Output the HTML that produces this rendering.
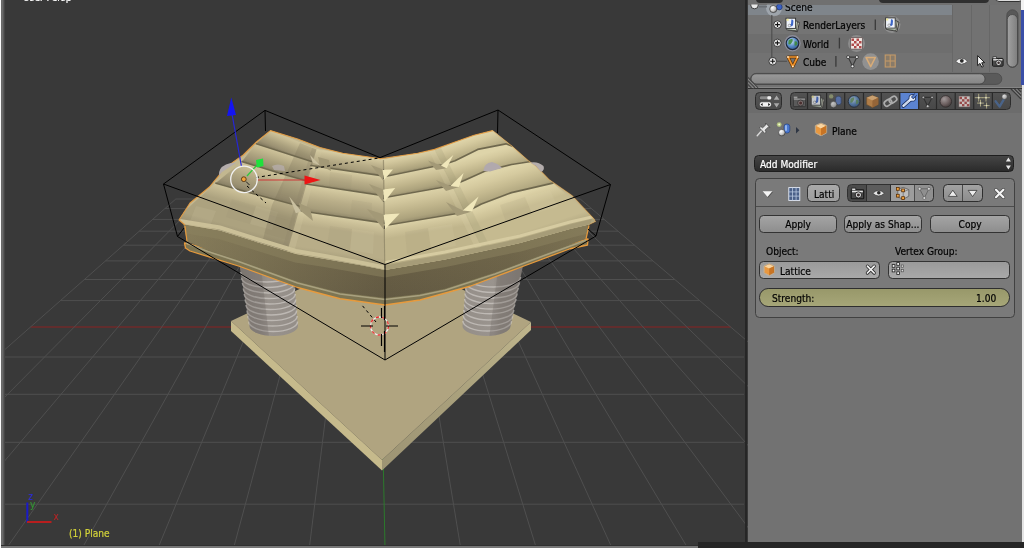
<!DOCTYPE html>
<html lang="en">
<head>
<meta charset="utf-8">
<title>Blender - Lattice Modifier</title>
<style>
html,body{margin:0;padding:0;}
body{width:1024px;height:548px;overflow:hidden;background:#727272;position:relative;font-family:"DejaVu Sans","Liberation Sans",sans-serif;font-stretch:condensed;font-size:10.1px;color:#000;}
.abs{position:absolute;}
#vp{position:absolute;left:0;top:0;width:748px;height:548px;display:block;}
#ico{position:absolute;left:0;top:0;width:1024px;height:548px;display:block;pointer-events:none;}
.t,.btn{will-change:transform;-webkit-text-stroke:0.2px currentColor;}
.t{position:absolute;white-space:nowrap;line-height:13px;height:13px;margin-top:1.2px;}
.btn{position:absolute;box-sizing:border-box;border:1px solid #333;border-radius:4.5px;background:linear-gradient(#a4a4a4,#8e8e8e);text-align:center;line-height:18.4px;white-space:nowrap;overflow:hidden;}
.fld{position:absolute;box-sizing:border-box;border:1px solid #333;border-radius:4.5px;background:linear-gradient(#9a9a9a,#a9a9a9);line-height:16px;white-space:nowrap;overflow:hidden;}
</style>
</head>
<body>
<svg id="vp" width="748" height="548" viewBox="0 0 748 548">
<defs>
<linearGradient id="colL" x1="0" y1="0" x2="1" y2="0">
<stop offset="0" stop-color="#7c7672"/><stop offset="0.36" stop-color="#88827d"/><stop offset="0.42" stop-color="#a49d98"/><stop offset="0.9" stop-color="#aaa39e"/><stop offset="1" stop-color="#9a938e"/>
</linearGradient>
<linearGradient id="colR" x1="0" y1="0" x2="1" y2="0">
<stop offset="0" stop-color="#9a938e"/><stop offset="0.1" stop-color="#a8a19c"/><stop offset="0.52" stop-color="#a39c97"/><stop offset="0.58" stop-color="#8a847f"/><stop offset="1" stop-color="#807a76"/>
</linearGradient>
<clipPath id="clipColL"><path d="M240,255 L249.5,328 Q251,334 262,335.5 Q274,337 287,334.5 Q297,331 298,323 L294,262 Z"/></clipPath>
<clipPath id="clipColR"><path d="M467,262 L462.5,322.5 Q463,331 474,334.5 Q487,337.5 500,335 Q509,333 510,328 L521.5,262 Z"/></clipPath>
<linearGradient id="band" x1="0" y1="0" x2="0" y2="1"><stop offset="0" stop-color="#6f6549"/><stop offset="1" stop-color="#625942"/></linearGradient>
<clipPath id="clipTop"><path d="M179,220 L190,203 L209.4,187 L218.8,175.7 L222,170 L233.8,161.6 L243.2,155 L256.4,142 L270.4,130.6 L297.7,139 L320,147.5 L342.8,153.2 L369,157 L380.3,158.8 L417.6,153.2 L434.5,149.4 L455,142 L474,135.3 L492.7,130.6 L511.5,145.7 L528.4,160.7 L536,166 L549,179.5 L572,195.4 L594,219 L595.5,221.5 L589,224.5 L570,229 L520,243 L445,259.5 L385,270 L362.5,265.5 L325,259 L296,254 L258,242.5 L220,230.5 L185,224.5 Z"/></clipPath>
<linearGradient id="colL2" x1="0" y1="0" x2="1" y2="0"><stop offset="0" stop-color="#817b75"/><stop offset="0.4" stop-color="#8d8781"/><stop offset="0.5" stop-color="#98928c"/><stop offset="1" stop-color="#948e88"/></linearGradient>
<linearGradient id="colR2" x1="0" y1="0" x2="1" y2="0"><stop offset="0" stop-color="#948e88"/><stop offset="0.5" stop-color="#9a948e"/><stop offset="0.62" stop-color="#8c867f"/><stop offset="1" stop-color="#827c76"/></linearGradient>
<linearGradient id="gA0" gradientUnits="userSpaceOnUse" x1="293.4" y1="140.0" x2="287.7" y2="154.2"><stop offset="0" stop-color="#cfc49c"/><stop offset="0.22" stop-color="#c2b790"/><stop offset="0.55" stop-color="#aca27f"/><stop offset="0.85" stop-color="#9b9173"/><stop offset="1" stop-color="#8a8166"/></linearGradient>
<linearGradient id="gA1" gradientUnits="userSpaceOnUse" x1="283.9" y1="152.7" x2="277.6" y2="172.3"><stop offset="0" stop-color="#cfc49c"/><stop offset="0.22" stop-color="#c2b790"/><stop offset="0.55" stop-color="#aca27f"/><stop offset="0.85" stop-color="#9b9173"/><stop offset="1" stop-color="#8a8166"/></linearGradient>
<linearGradient id="gA2" gradientUnits="userSpaceOnUse" x1="274.6" y1="171.3" x2="266.8" y2="197.4"><stop offset="0" stop-color="#cfc49c"/><stop offset="0.22" stop-color="#c2b790"/><stop offset="0.55" stop-color="#aca27f"/><stop offset="0.85" stop-color="#9b9173"/><stop offset="1" stop-color="#8a8166"/></linearGradient>
<linearGradient id="gA3" gradientUnits="userSpaceOnUse" x1="257.5" y1="194.6" x2="245.4" y2="238.7"><stop offset="0" stop-color="#cfc49c"/><stop offset="0.12" stop-color="#c2b790"/><stop offset="0.32" stop-color="#aca27f"/><stop offset="0.8" stop-color="#aca27f"/><stop offset="1" stop-color="#9b9173"/></linearGradient>
<linearGradient id="gB0" gradientUnits="userSpaceOnUse" x1="350.8" y1="154.4" x2="348.3" y2="170.9"><stop offset="0" stop-color="#d8cea5"/><stop offset="0.2" stop-color="#cbc098"/><stop offset="0.5" stop-color="#b8ad88"/><stop offset="0.85" stop-color="#a69c7a"/><stop offset="1" stop-color="#90876a"/></linearGradient>
<linearGradient id="gB1" gradientUnits="userSpaceOnUse" x1="348.0" y1="170.8" x2="345.3" y2="189.9"><stop offset="0" stop-color="#d8cea5"/><stop offset="0.2" stop-color="#cbc098"/><stop offset="0.5" stop-color="#b8ad88"/><stop offset="0.85" stop-color="#a69c7a"/><stop offset="1" stop-color="#90876a"/></linearGradient>
<linearGradient id="gB2" gradientUnits="userSpaceOnUse" x1="345.5" y1="189.9" x2="341.5" y2="216.8"><stop offset="0" stop-color="#d8cea5"/><stop offset="0.2" stop-color="#cbc098"/><stop offset="0.5" stop-color="#b8ad88"/><stop offset="0.85" stop-color="#a69c7a"/><stop offset="1" stop-color="#90876a"/></linearGradient>
<linearGradient id="gB3" gradientUnits="userSpaceOnUse" x1="341.5" y1="216.8" x2="335.2" y2="260.3"><stop offset="0" stop-color="#d8cea5"/><stop offset="0.12" stop-color="#cbc098"/><stop offset="0.32" stop-color="#b8ad88"/><stop offset="0.8" stop-color="#b8ad88"/><stop offset="1" stop-color="#a69c7a"/></linearGradient>
<linearGradient id="gC0" gradientUnits="userSpaceOnUse" x1="409.8" y1="154.4" x2="413.1" y2="170.7"><stop offset="0" stop-color="#dcd2a8"/><stop offset="0.25" stop-color="#d1c69c"/><stop offset="0.55" stop-color="#c0b58c"/><stop offset="0.85" stop-color="#ada37d"/><stop offset="1" stop-color="#978e6e"/></linearGradient>
<linearGradient id="gC1" gradientUnits="userSpaceOnUse" x1="413.0" y1="170.8" x2="417.3" y2="191.8"><stop offset="0" stop-color="#dcd2a8"/><stop offset="0.25" stop-color="#d1c69c"/><stop offset="0.55" stop-color="#c0b58c"/><stop offset="0.85" stop-color="#ada37d"/><stop offset="1" stop-color="#978e6e"/></linearGradient>
<linearGradient id="gC2" gradientUnits="userSpaceOnUse" x1="418.8" y1="191.5" x2="423.7" y2="219.1"><stop offset="0" stop-color="#dcd2a8"/><stop offset="0.25" stop-color="#d1c69c"/><stop offset="0.55" stop-color="#c0b58c"/><stop offset="0.85" stop-color="#ada37d"/><stop offset="1" stop-color="#978e6e"/></linearGradient>
<linearGradient id="gC3" gradientUnits="userSpaceOnUse" x1="425.5" y1="218.8" x2="432.5" y2="260.5"><stop offset="0" stop-color="#dcd2a8"/><stop offset="0.12" stop-color="#d1c69c"/><stop offset="0.32" stop-color="#c0b58c"/><stop offset="0.8" stop-color="#c0b58c"/><stop offset="1" stop-color="#ada37d"/></linearGradient>
<linearGradient id="gD0" gradientUnits="userSpaceOnUse" x1="463.6" y1="140.0" x2="469.4" y2="158.0"><stop offset="0" stop-color="#ded4a9"/><stop offset="0.25" stop-color="#d5ca9f"/><stop offset="0.55" stop-color="#c5ba90"/><stop offset="0.85" stop-color="#b2a881"/><stop offset="1" stop-color="#9a9070"/></linearGradient>
<linearGradient id="gD1" gradientUnits="userSpaceOnUse" x1="477.2" y1="155.5" x2="482.8" y2="175.9"><stop offset="0" stop-color="#ded4a9"/><stop offset="0.25" stop-color="#d5ca9f"/><stop offset="0.55" stop-color="#c5ba90"/><stop offset="0.85" stop-color="#b2a881"/><stop offset="1" stop-color="#9a9070"/></linearGradient>
<linearGradient id="gD2" gradientUnits="userSpaceOnUse" x1="491.8" y1="173.5" x2="500.1" y2="200.5"><stop offset="0" stop-color="#ded4a9"/><stop offset="0.25" stop-color="#d5ca9f"/><stop offset="0.55" stop-color="#c5ba90"/><stop offset="0.85" stop-color="#b2a881"/><stop offset="1" stop-color="#9a9070"/></linearGradient>
<linearGradient id="gD3" gradientUnits="userSpaceOnUse" x1="509.4" y1="197.6" x2="523.8" y2="241.1"><stop offset="0" stop-color="#ded4a9"/><stop offset="0.12" stop-color="#d5ca9f"/><stop offset="0.32" stop-color="#c5ba90"/><stop offset="0.8" stop-color="#c5ba90"/><stop offset="1" stop-color="#b2a881"/></linearGradient>
<linearGradient id="baseR" gradientUnits="userSpaceOnUse" x1="382" y1="465" x2="531" y2="326"><stop offset="0" stop-color="#9d9474"/><stop offset="0.5" stop-color="#a9a07c"/><stop offset="1" stop-color="#bfb58c"/></linearGradient>
<clipPath id="clipBand"><path d="M183,222 L220,229.6 L258,241.5 L296,253 L325,257.5 L362.5,264 L385,268 L445,257.5 L520,242 L570,228.5 L590,222 L586,238.75 L545,253.75 L495,272.5 L445,288.75 L420,294 L385,298 L340,292.5 L297.5,281.5 L240,260.5 L207.8,250 L187,241.5 Z"/></clipPath>
<linearGradient id="bandH" gradientUnits="userSpaceOnUse" x1="183" y1="0" x2="590" y2="0"><stop offset="0" stop-color="#a89e74" stop-opacity="0.42"/><stop offset="0.35" stop-color="#a89e74" stop-opacity="0.12"/><stop offset="0.5" stop-color="#a89e74" stop-opacity="0"/><stop offset="0.8" stop-color="#a89e74" stop-opacity="0.08"/><stop offset="1" stop-color="#a89e74" stop-opacity="0.25"/></linearGradient>
</defs>
<rect x="0" y="0" width="748" height="548" fill="#393939"/>
<!-- grid floor -->
<g id="grid" stroke="#4f4f4f" stroke-width="1" fill="none">
<line x1="175.8" y1="199" x2="580.2" y2="199"/>
<line x1="164.9" y1="208.6" x2="591.5" y2="208.6"/>
<line x1="152.7" y1="219.4" x2="604.2" y2="219.4"/>
<line x1="139.3" y1="231.2" x2="618.0" y2="231.2"/>
<line x1="123.4" y1="245.2" x2="634.5" y2="245.2"/>
<line x1="105.5" y1="260.9" x2="652.9" y2="260.9"/>
<line x1="84.4" y1="279.5" x2="674.8" y2="279.5"/>
<line x1="60.5" y1="300.6" x2="699.6" y2="300.6"/>
<line x1="30.5" y1="327" x2="730.6" y2="327" stroke="#8a2222"/>
<line x1="0.0" y1="357" x2="744.0" y2="357"/>
<line x1="0.0" y1="394.3" x2="744.0" y2="394.3"/>
<line x1="0.0" y1="442.3" x2="744.0" y2="442.3"/>
<line x1="0.0" y1="504.2" x2="744.0" y2="504.2"/>
<line x1="175.8" y1="199" x2="-220.4" y2="548"/>
<line x1="201.1" y1="199" x2="-144.7" y2="548"/>
<line x1="226.4" y1="199" x2="-69.1" y2="548"/>
<line x1="251.6" y1="199" x2="6.6" y2="548"/>
<line x1="276.9" y1="199" x2="82.3" y2="548"/>
<line x1="302.2" y1="199" x2="158.0" y2="548"/>
<line x1="327.5" y1="199" x2="233.6" y2="548"/>
<line x1="352.7" y1="199" x2="309.3" y2="548"/>
<line x1="378.0" y1="199" x2="385.0" y2="548" stroke="#2c7a2c"/>
<line x1="403.3" y1="199" x2="460.7" y2="548"/>
<line x1="428.5" y1="199" x2="536.3" y2="548"/>
<line x1="453.8" y1="199" x2="612.0" y2="548"/>
<line x1="479.1" y1="199" x2="687.7" y2="548"/>
<line x1="504.4" y1="199" x2="763.3" y2="548"/>
<line x1="529.6" y1="199" x2="839.0" y2="548"/>
<line x1="554.9" y1="199" x2="914.7" y2="548"/>
<line x1="580.2" y1="199" x2="990.4" y2="548"/>

</g>
<!-- base plate -->
<g id="base">
<polygon points="231,321 381,251 531,322 382,460" fill="#b0a480"/>
<polygon points="231,321 382,460 382,470.5 231,331" fill="#c6ba8c"/>
<polygon points="382,460 531,322 531,330 382,470.5" fill="url(#baseR)"/>
</g>
<!-- columns -->
<g id="colLeft">
<path d="M238.0,256 L249.5,326 A24.2,10 0 0 0 298.0,326 L292.1,256 Z" fill="url(#colL2)"/>
<g fill="none" stroke="#e4e0db" stroke-width="1.5" stroke-opacity="0.5">
<path d="M240.6,272.0 A26.4,10 0 0 0 293.4,272.0"/>
<path d="M241.5,277.5 A26.2,10 0 0 0 293.9,277.5"/>
<path d="M242.4,283.0 A26.0,10 0 0 0 294.4,283.0"/>
<path d="M243.3,288.5 A25.7,10 0 0 0 294.8,288.5"/>
<path d="M244.2,294.0 A25.5,10 0 0 0 295.3,294.0"/>
<path d="M245.1,299.5 A25.3,10 0 0 0 295.8,299.5"/>
<path d="M246.0,305.0 A25.1,10 0 0 0 296.2,305.0"/>
<path d="M246.9,310.5 A24.9,10 0 0 0 296.7,310.5"/>
<path d="M247.9,316.0 A24.6,10 0 0 0 297.2,316.0"/>
<path d="M248.8,321.5 A24.4,10 0 0 0 297.6,321.5"/>
</g>
<clipPath id="clip_colLeft"><path d="M238.0,256 L249.5,326 A24.2,10 0 0 0 298.0,326 L292.1,256 Z"/></clipPath>
<path d="M259.6,256 L268.9,336 L248.5,336 L237.0,256 Z" fill="#6e6864" fill-opacity="0.3" clip-path="url(#clip_colLeft)"/>
</g>
<g id="colRight">
<path d="M467.5,262 L462.5,326 A24.0,10 0 0 0 510.5,326 L523.7,262 Z" fill="url(#colR2)"/>
<g fill="none" stroke="#e4e0db" stroke-width="1.5" stroke-opacity="0.5">
<path d="M466.3,277.0 A27.1,10 0 0 0 520.6,277.0"/>
<path d="M465.9,282.5 A26.8,10 0 0 0 519.5,282.5"/>
<path d="M465.5,288.0 A26.4,10 0 0 0 518.3,288.0"/>
<path d="M465.0,293.5 A26.1,10 0 0 0 517.2,293.5"/>
<path d="M464.6,299.0 A25.7,10 0 0 0 516.1,299.0"/>
<path d="M464.2,304.5 A25.4,10 0 0 0 514.9,304.5"/>
<path d="M463.8,310.0 A25.0,10 0 0 0 513.8,310.0"/>
<path d="M463.3,315.5 A24.7,10 0 0 0 512.7,315.5"/>
<path d="M462.9,321.0 A24.3,10 0 0 0 511.5,321.0"/>
</g>
<clipPath id="clip_colRight"><path d="M467.5,262 L462.5,326 A24.0,10 0 0 0 510.5,326 L523.7,262 Z"/></clipPath>
<path d="M499.0,262 L489.4,336 L511.5,336 L524.7,262 Z" fill="#6e6864" fill-opacity="0.3" clip-path="url(#clip_colRight)"/>
</g>
<!-- roof -->
<g id="roof">
<!-- lower lip -->
<path d="M184.5,243 L185.5,248 L190,251 L240,266.5 L297.5,287.5 L340,298.75 L385,305 L420,300 L470,286.25 L520,267.5 L570,248.75 L587.5,245 L588,239 L385,290 Z" fill="#7d7553" stroke="#e79a3c" stroke-width="1.3" stroke-linejoin="round"/>
<path d="M186,243 L207.8,251.5 L240,262 L297.5,283 L340,294 L385,299.5 L420,295.5 L445,290.25 L495,274 L545,255.25 L586,240.25" fill="none" stroke="#a9a17f" stroke-width="1.6"/>
<!-- dark band -->
<path d="M183,222 L220,229.6 L258,241.5 L296,253 L325,257.5 L362.5,264 L385,268 L445,257.5 L520,242 L570,228.5 L590,222 L586,238.75 L545,253.75 L495,272.5 L445,288.75 L420,294 L385,298 L340,292.5 L297.5,281.5 L240,260.5 L207.8,250 L187,241.5 Z" fill="url(#band)"/>
<path d="M183,222 L220,229.6 L258,241.5 L296,253 L325,257.5 L362.5,264 L385,268 L445,257.5 L520,242 L570,228.5 L590,222 L586,238.75 L545,253.75 L495,272.5 L445,288.75 L420,294 L385,298 L340,292.5 L297.5,281.5 L240,260.5 L207.8,250 L187,241.5 Z" fill="url(#bandH)"/>
<path d="M186,229 L220,234.6 L258,246.5 L296,258 L325,262.5 L362.5,269 L385,273 L445,262.5 L520,247 L570,233.5 L588,229" fill="none" stroke="#8a825e" stroke-opacity="0.55" stroke-width="9" clip-path="url(#clipBand)"/>
<!-- top surface -->
<path id="rooftop" d="M179,220 L190,203 L209.4,187 L218.8,175.7 L222,170 L233.8,161.6 L243.2,155 L256.4,142 L270.4,130.6 L297.7,139 L320,147.5 L342.8,153.2 L369,157 L380.3,158.8 L417.6,153.2 L434.5,149.4 L455,142 L474,135.3 L492.7,130.6 L511.5,145.7 L528.4,160.7 L536,166 L549,179.5 L572,195.4 L594,219 L595.5,221.5 L589,224.5 L570,229 L520,243 L445,259.5 L385,270 L362.5,265.5 L325,259 L296,254 L258,242.5 L220,230.5 L185,224.5 Z" fill="#c4b992"/>
<g clip-path="url(#clipTop)">
<rect x="170" y="120" width="440" height="160" fill="#c2b790"/>
<polygon points="270.4,130.6 316.5,149.4 311.5,161.5 256.4,143.8" fill="url(#gA0)" stroke="url(#gA0)" stroke-width="0.6"/>
<polygon points="256.4,143.8 311.5,161.5 307.0,181.0 279.0,173.0 242.3,161.6" fill="url(#gA1)" stroke="url(#gA1)" stroke-width="0.6"/>
<polygon points="242.3,161.6 279.0,173.0 307.0,181.0 299.0,206.0 256.4,194.5 216.0,183.2" fill="url(#gA2)" stroke="url(#gA2)" stroke-width="0.6"/>
<polygon points="216.0,183.2 256.4,194.5 299.0,206.0 287.5,251.0 258.0,242.0 220.0,230.0 176.0,219.0" fill="url(#gA3)" stroke="url(#gA3)" stroke-width="0.6"/>
<polygon points="316.5,149.4 354.0,155.0 385.0,159.5 385.0,176.2 311.0,165.5" fill="url(#gB0)" stroke="url(#gB0)" stroke-width="0.6"/>
<polygon points="311.0,165.5 385.0,176.2 385.0,195.8 306.0,184.0" fill="url(#gB1)" stroke="url(#gB1)" stroke-width="0.6"/>
<polygon points="306.0,184.0 385.0,195.8 385.0,223.2 298.0,210.5" fill="url(#gB2)" stroke="url(#gB2)" stroke-width="0.6"/>
<polygon points="298.0,210.5 385.0,223.2 385.0,270.0 325.0,258.5 287.5,251.0" fill="url(#gB3)" stroke="url(#gB3)" stroke-width="0.6"/>
<polygon points="385.0,159.5 434.5,149.4 441.0,165.0 385.0,176.5" fill="url(#gC0)" stroke="url(#gC0)" stroke-width="0.6"/>
<polygon points="385.0,176.5 441.0,165.0 452.5,185.5 385.0,197.5" fill="url(#gC1)" stroke="url(#gC1)" stroke-width="0.6"/>
<polygon points="385.0,197.5 452.5,185.5 466.0,212.0 385.0,225.5" fill="url(#gC2)" stroke="url(#gC2)" stroke-width="0.6"/>
<polygon points="385.0,225.5 466.0,212.0 483.0,250.5 445.0,259.0 385.0,270.0" fill="url(#gC3)" stroke="url(#gC3)" stroke-width="0.6"/>
<polygon points="434.5,149.4 455.0,142.0 474.0,135.3 492.7,130.6 512.0,146.0 505.9,143.8 477.7,149.4 455.0,160.7 442.5,165.0" fill="url(#gD0)" stroke="url(#gD0)" stroke-width="0.6"/>
<polygon points="442.5,165.0 455.0,160.7 477.7,149.4 505.9,143.8 512.0,146.0 531.0,161.5 511.5,164.5 485.2,171.0 466.4,179.5 452.6,185.5" fill="url(#gD1)" stroke="url(#gD1)" stroke-width="0.6"/>
<polygon points="452.6,185.5 466.4,179.5 485.2,171.0 511.5,164.5 531.0,161.5 552.8,183.2 511.5,192.6 481.4,204.0 466.0,212.0" fill="url(#gD2)" stroke="url(#gD2)" stroke-width="0.6"/>
<polygon points="466.0,212.0 481.4,204.0 511.5,192.6 552.8,183.2 597.0,221.0 570.0,229.0 520.0,243.0 483.0,250.5" fill="url(#gD3)" stroke="url(#gD3)" stroke-width="0.6"/>
<g fill="#8f866a" fill-opacity="0.11"><polygon points="232,199 256,206 250,224 226,217"/><polygon points="262,176 284,183 278,201 256,194"/><polygon points="270,215 292,221 288,240 264,233"/><polygon points="330,226 352,229 350,250 327,246"/><polygon points="352,200 372,203 371,221 350,218"/><polygon points="330,172 352,175 351,190 329,187"/><polygon points="405,232 428,228 431,250 407,254"/><polygon points="500,205 525,197 532,214 506,222"/></g>
<g fill="#e6dcb2" fill-opacity="0.11"><polygon points="256,206 278,212 272,230 250,224"/><polygon points="196,206 216,211 210,226 190,221"/><polygon points="352,229 374,232 373,254 350,250"/><polygon points="428,228 452,224 456,246 431,250"/><polygon points="525,197 550,190 558,207 532,214"/></g>
<polygon points="300,143 316.5,149.4 287.5,251 262,243 272,205 288,170" fill="#6e664e" fill-opacity="0.22"/>
<polygon points="312,148 316.5,149.4 287.5,251 282,249.5" fill="#8f866a" fill-opacity="0.3"/>
<polygon points="316.5,149.4 322,150.2 294,252.5 287.5,251" fill="#d2c89f" fill-opacity="0.3"/>
<polygon points="429,150.5 434.5,149.4 483,250.5 477,251.8" fill="#d8cea4" fill-opacity="0.3"/>
<polygon points="434.5,149.4 441,148 491,249 483,250.5" fill="#9d9474" fill-opacity="0.22"/>
<path d="M385,265.5 L445,254.5 L520,238.5 L570,224.5 L592,219 L590,225 L570,229.5 L520,243.5 L445,260 L385,270.5 Z" fill="#a69c78"/>
<path d="M180,221 L220,227.5 L258,239.5 L296,251 L325,256 L362.5,263 L385,267.5" fill="none" stroke="#cbc098" stroke-width="4"/><path d="M385,262.5 L445,252 L520,236 L570,222 L594,216.5" fill="none" stroke="#d6cba1" stroke-width="3"/>
<g fill="none" stroke="#6f684e" stroke-width="1.7" stroke-linecap="round" stroke-linejoin="round"><path d="M256.4,143.8 L311.5,161.5"/><path d="M242.3,161.6 L279.0,173.0 L307.0,181.0"/><path d="M216.0,183.2 L256.4,194.5 L299.0,206.0"/><path d="M311.0,165.5 L385.0,176.2"/><path d="M306.0,184.0 L385.0,195.8"/><path d="M298.0,210.5 L385.0,223.2"/><path d="M385.0,176.5 L441.0,165.0"/><path d="M385.0,197.5 L452.5,185.5"/><path d="M385.0,225.5 L466.0,212.0"/><path d="M442.5,165.0 L455.0,160.7 L477.7,149.4 L505.9,143.8 L512.0,146.0"/><path d="M452.6,185.5 L466.4,179.5 L485.2,171.0 L511.5,164.5 L531.0,161.5"/><path d="M466.0,212.0 L481.4,204.0 L511.5,192.6 L552.8,183.2"/></g>
<path d="M383.4,160 L384.8,268" stroke="#8a8164" stroke-width="1.1" stroke-opacity="0.7" fill="none"/>
<path d="M383.5,169 V180 M383.8,189 V202 M384.2,214 V229" stroke="#4a4534" stroke-width="1.2" stroke-dasharray="4 2" fill="none"/>
<g fill="#a39977">
<polygon points="371,165 383,169.5 383,180.5"/><polygon points="369,184 383.4,189.5 383.4,202.5"/><polygon points="367,209 383.8,214.5 383.8,229.5"/>
<polygon points="428,160.5 441,165.4 446.7,168.2 436,170"/><polygon points="436,180 450.4,186 459,187 446,191"/><polygon points="446,202 462.7,210.5 472,211.4 457,216"/>
<polygon points="318,157 329,160 331,171 320.2,165.4"/><polygon points="299,203 310,208 313,221 301.4,211.4"/>
</g>
<g fill="#f0e7ba">
<polygon points="382.5,169.7 393,169.5 384,180"/><polygon points="383,189.4 395.2,188 384.4,202"/><polygon points="383.6,214.6 399.7,213.6 385.2,229"/>
<polygon points="441,165.4 453.3,155 446.7,168.2"/><polygon points="450.4,186 463.6,173 459,187"/><polygon points="462.7,210.5 478.6,196.4 472,211.4"/>
</g>
<g fill="#c9c0a0">
<polygon points="310,155 320.2,165.4 312.7,162.6"/><polygon points="289.2,196.4 301.4,211.4 295.8,213.3"/>
</g>
</g>

<path d="M185,225 L179,220 L190,203 L209.4,187 L218.8,175.7 L222,170 L233.8,161.6 L243.2,155 L256.4,142 L270.4,130.6 L297.7,139 L320,147.5 L342.8,153.2 L369,157 L380.3,158.8 L417.6,153.2 L434.5,149.4 L455,142 L474,135.3 L492.7,130.6" fill="none" stroke="#e2993f" stroke-opacity="0.9" stroke-width="1.15" stroke-linejoin="round"/>
<path d="M492.7,130.6 L511.5,145.7 L528.4,160.7 L536,166 L549,179.5 L572,195.4 L594,219 L595.5,221.5 L589.5,224.5" fill="none" stroke="#e79a3c" stroke-opacity="0.4" stroke-width="1.2" stroke-linejoin="round"/>
<path d="M185,226 L187,241.5 M589,225.5 L586,239" stroke="#e79a3c" stroke-width="1.2" fill="none"/>
<!-- column caps peeking -->
<path d="M219,176 Q218,168 226,164.5 Q232,162 236,163 L222,172 Z" fill="#b4adac"/>
<path d="M530,162.6 Q538,161 543.5,166 Q545,170 541,172 L536,166 Z" fill="#b4adac"/>
<path d="M483.3,171 Q484,163 492,162 Q499,164 502,168 L490,171.5 Z" fill="#b1a9ad"/>
<path d="M272,166 Q278,163 284,166 L285,171 L274,170 Z" fill="#b5adaa" fill-opacity="0.8"/>
</g>
<!-- lattice -->
<g id="lattice" fill="none" stroke="#000" stroke-width="1">
<path d="M163.5,184 L265,110.4 L380,157.6 L498,110 L610.5,184.5 L385,264.5 Z"/>
<path d="M163.5,184 L177.5,236.5 L385,360 L596,236 L610.5,184.5"/>
<path d="M385,264.5 L385,360"/>
<path d="M265,110.4 L265.5,131"/><path d="M498,110 L497.5,133"/>
<path d="M177.5,236.5 L184,228"/><path d="M596,236 L588,229"/>
</g>
<!-- relationship dashed lines -->
<g fill="none" stroke="#000" stroke-width="1" stroke-dasharray="3 3">
<path d="M256,177.5 L379,158"/><path d="M247,186 L266,203"/><path d="M376,322 L361,304"/>
</g>
<!-- manipulator -->
<g id="manip">
<line x1="241.4" y1="166" x2="232" y2="114" stroke="#2626d8" stroke-width="1.2"/>
<polygon points="231.3,97.5 227,116 236,115" fill="#1414f2"/>
<line x1="257" y1="180" x2="306" y2="180" stroke="#cc3636" stroke-width="1.2"/>
<polygon points="320.5,180 304.5,175.5 304.5,184.5" fill="#ee1414"/>
<line x1="247" y1="176" x2="257" y2="165" stroke="#2ec83c" stroke-width="1.3"/>
<polygon points="256,160 263,158.5 263.5,166 257,167.5" fill="#1ee23c"/>
<circle cx="244" cy="179.4" r="13.3" fill="none" stroke="#f0f0f0" stroke-width="1.3"/>
<circle cx="243.8" cy="179.2" r="2.4" fill="#f2a23a" stroke="#4a2a08" stroke-width="0.8"/>
<line x1="246" y1="181.5" x2="249.5" y2="185" stroke="#222" stroke-width="1"/>
</g>
<!-- 3d cursor -->
<g id="cursor3d" fill="none">
<circle cx="379.5" cy="326" r="9" stroke="#f0f0f0" stroke-width="1.3"/>
<circle cx="379.5" cy="326" r="9" stroke="#e83030" stroke-width="1.3" stroke-dasharray="3.2 3.2"/>
<path d="M361,326 H373 M386,326 H398 M384.5,306 V320 M384.5,331 V352 M381.5,308 V318 M381.5,334 V346" stroke="#000" stroke-width="1.2"/>
</g>
<!-- mini axis -->
<g id="miniaxis">
<line x1="27.3" y1="502.5" x2="27.3" y2="522.5" stroke="#1a1ac8" stroke-width="2"/>
<line x1="27" y1="522" x2="51.5" y2="522" stroke="#b81e1e" stroke-width="2"/>
<text x="28.5" y="499.5" font-family="DejaVu Sans, Liberation Sans, sans-serif" font-size="10" fill="#2a2ad8">z</text>
<text x="30" y="508" font-family="DejaVu Sans, Liberation Sans, sans-serif" font-size="10" fill="#30a030">y</text>
<text x="53" y="520" font-family="DejaVu Sans, Liberation Sans, sans-serif" font-size="10" fill="#b82020">x</text>
</g>
</svg>
<!-- window edges -->
<div class="abs" style="left:0;top:0;width:1px;height:548px;background:#fafafa"></div>
<div class="abs" style="left:1px;top:0;width:4px;height:548px;background:linear-gradient(90deg,#686868 0,#6c6c6c 2px,#585858 2px,#585858 3px,#454545 3px)"></div>
<div class="abs" style="left:744.6px;top:0;width:2.7px;height:548px;background:#262626"></div>
<div class="abs" style="left:1px;top:544.6px;width:697px;height:1px;background:#303030"></div>
<div class="abs" style="left:1px;top:545.5px;width:697px;height:3px;background:#777"></div>
<div class="abs" style="left:698px;top:542px;width:326px;height:6px;background:#262626"></div>
<div class="abs" style="left:1021px;top:0;width:3px;height:10px;background:#f2f2f2"></div>
<div class="abs" style="left:1021px;top:10px;width:3px;height:75px;background:#3a4fa8"></div>
<div class="abs" style="left:1022px;top:85px;width:2px;height:457px;background:#e4e4e4"></div>

<!-- outliner -->
<div id="outliner" class="abs" style="left:747.5px;top:0;width:273.5px;height:88px;background:#727272;overflow:hidden">
  <div class="abs" style="left:0;top:4.5px;width:205px;height:10.3px;background:#7f858b"></div>
  <div class="abs" style="left:0;top:14.8px;width:205px;height:19.2px;background:#747474"></div>
  <div class="abs" style="left:0;top:34px;width:205px;height:18.6px;background:#6e6e6e"></div>
  <div class="abs" style="left:0;top:0;width:274px;height:4.5px;background:#707070"></div>
  <div class="abs" style="left:8px;top:-8px;width:27px;height:10.5px;border-radius:4px;background:#2f2f2f"></div>
  <div class="abs" style="left:131px;top:-8px;width:110px;height:10.5px;border-radius:4px;background:#2f2f2f"></div>
  <div class="abs" style="left:247px;top:-9.6px;width:26px;height:10px;border-radius:4px;background:#dcdcdc;border:1px solid #333"></div>
  <div class="abs" style="left:204.5px;top:4.5px;width:1px;height:67px;background:#676767"></div>
  <div class="abs" style="left:223.3px;top:4.5px;width:1px;height:67px;background:#676767"></div>
  <div class="abs" style="left:241.6px;top:4.5px;width:1px;height:67px;background:#676767"></div>
</div>
<div class="abs" style="left:747.5px;top:4.5px;width:205px;height:11px;overflow:hidden"><span class="t" style="left:37.5px;top:-5px">Scene</span></div>
<span class="t" style="left:803.4px;top:18.2px">RenderLayers</span>
<span class="t" style="left:803.4px;top:36.6px">World</span>
<span class="t" style="left:803.4px;top:55.1px">Cube</span>
<!-- properties header -->
<div class="abs" style="left:747.5px;top:86.5px;width:274.5px;height:1px;background:#858585"></div>
<div class="abs" style="left:747.5px;top:87.5px;width:274.5px;height:1.2px;background:#333"></div>
<div class="abs" style="left:747.5px;top:88.7px;width:274.5px;height:24px;background:#6c6c6c"></div>
<div id="tabs" class="abs" style="left:790.4px;top:92.2px;width:220.2px;height:17.9px;box-sizing:border-box;border:1px solid #2c2c2c;border-radius:4.5px;background:linear-gradient(#525252,#484848)"></div>
<div class="abs" style="left:900.2px;top:93px;width:18px;height:16.3px;background:#5b83d0"></div>
<div class="abs" style="left:755px;top:92.2px;width:27.3px;height:17.9px;box-sizing:border-box;border:1px solid #2c2c2c;border-radius:4.5px;background:linear-gradient(#565656,#4a4a4a)"></div>
<span class="t" style="left:831.8px;top:124.3px">Plane</span>

<!-- Add Modifier -->
<div class="abs" style="left:754px;top:154.8px;width:260.4px;height:17.2px;box-sizing:border-box;border:1px solid #1e1e1e;border-radius:4.5px;background:linear-gradient(#454545,#2b2b2b)"></div>
<span class="t" style="left:760.4px;top:157.2px;color:#fff">Add Modifier</span>

<!-- modifier box -->
<div class="abs" style="left:754.5px;top:178px;width:260px;height:140.3px;box-sizing:border-box;border:1px solid #414141;border-radius:4.5px;background:#7a7a7a"></div>
<div class="abs" style="left:755.5px;top:205.9px;width:258px;height:1px;background:#4c4c4c"></div>
<div class="fld" style="left:806.7px;top:184.4px;width:33px;height:18px;background:linear-gradient(#a9a9a9,#9e9e9e)"></div>
<span class="t" style="left:814.3px;top:187.2px">Latti</span>
<div class="abs" style="left:847px;top:184.2px;width:87.4px;height:18px;box-sizing:border-box;border:1px solid #303030;border-radius:4.5px;background:linear-gradient(90deg,#4b4b4b 0,#4b4b4b 18px,#2e2e2e 18px,#2e2e2e 18.9px,#5c5c5c 18.9px,#5c5c5c 41.9px,#2e2e2e 41.9px,#2e2e2e 42.8px,#9d9d9d 42.8px,#9d9d9d 66.1px,#4c4c4c 66.1px,#4c4c4c 67px,#8f8f8f 67px)"></div>
<div class="abs" style="left:943.3px;top:184.4px;width:39.6px;height:18px;box-sizing:border-box;border:1px solid #2e2e2e;border-radius:4.5px;background:linear-gradient(#a2a2a2,#8c8c8c)"></div>
<div class="abs" style="left:962.3px;top:185.4px;width:1px;height:16px;background:#4a4a4a"></div>

<div class="btn" style="left:758.7px;top:214.9px;width:78.2px;height:18px">Apply</div>
<div class="btn" style="left:844.4px;top:214.9px;width:77.8px;height:18px">Apply as Shap...</div>
<div class="btn" style="left:929.8px;top:214.9px;width:80.2px;height:18px">Copy</div>
<span class="t" style="left:765.6px;top:244px">Object:</span>
<span class="t" style="left:895px;top:244px">Vertex Group:</span>
<div class="fld" style="left:758.7px;top:260.8px;width:121.5px;height:17.8px"></div>
<span class="t" style="left:780px;top:263.4px">Lattice</span>
<div class="fld" style="left:887.7px;top:260.8px;width:122.3px;height:17.8px"></div>
<div class="abs" style="left:758.7px;top:288.4px;width:251.3px;height:18.4px;box-sizing:border-box;border:1px solid #2e2e2e;border-radius:9.2px;background:linear-gradient(#98986a,#a6a678)"></div>
<span class="t" style="left:771.8px;top:291.2px">Strength:</span>
<span class="t" style="right:28px;top:291.2px">1.00</span>
<!-- viewport overlay text -->
<span class="t" style="left:23px;top:-10.4px;color:#fff">User Persp</span>
<span class="t" style="left:68.6px;top:526.3px;color:#d2d23a">(1) Plane</span>
<svg id="ico" width="1024" height="548" viewBox="0 0 1024 548">
<defs>
<radialGradient id="gSph" cx="0.35" cy="0.3" r="0.8"><stop offset="0" stop-color="#ffffff"/><stop offset="0.6" stop-color="#c8c8c8"/><stop offset="1" stop-color="#707070"/></radialGradient>
<radialGradient id="gGlobe" cx="0.4" cy="0.35" r="0.75"><stop offset="0" stop-color="#cfe4f4"/><stop offset="0.5" stop-color="#5a8cc8"/><stop offset="1" stop-color="#2a4a80"/></radialGradient>
<radialGradient id="gMat" cx="0.35" cy="0.3" r="0.8"><stop offset="0" stop-color="#b4aaaa"/><stop offset="0.55" stop-color="#786868"/><stop offset="1" stop-color="#3a3030"/></radialGradient>
<linearGradient id="gThumbH" x1="0" y1="0" x2="0" y2="1"><stop offset="0" stop-color="#9a9a9a"/><stop offset="1" stop-color="#848484"/></linearGradient>
<linearGradient id="gThumbV" x1="0" y1="0" x2="1" y2="0"><stop offset="0" stop-color="#a2a2a2"/><stop offset="1" stop-color="#7e7e7e"/></linearGradient>
<clipPath id="clipOut"><rect x="747.5" y="4.5" width="274" height="84"/></clipPath>
<g id="plusc"><circle r="3.8" fill="#e8e8e8" stroke="#2e2e2e" stroke-width="0.9"/><path d="M-2.4,0 H2.4 M0,-2.4 V2.4" stroke="#111" stroke-width="1.1"/></g>
<g id="rlayers">
<rect x="3.2" y="3.6" width="10" height="9.6" fill="#d8d8c4" stroke="#3a3a3a" stroke-width="0.9" transform="rotate(12 8 8)"/>
<rect x="1.6" y="3" width="10" height="9.6" fill="#c9d8c2" stroke="#3a3a3a" stroke-width="0.8" transform="rotate(6 6 8)"/>
<rect x="0.6" y="0.6" width="9.6" height="10.2" fill="#eef2f8" stroke="#333" stroke-width="0.9"/>
<path d="M6,2 Q8.2,1.6 8,4 L7.6,7.6 Q5.6,9.6 3.6,8.6 Q3,7 4.6,6.6 L5.6,6.4 Z" fill="#3c66c8"/>
<circle cx="4.1" cy="7.9" r="1.3" fill="#f4f4f4" stroke="#555" stroke-width="0.4"/>
<rect x="1.2" y="1.2" width="2" height="2" fill="#f0e890"/>
</g>
<g id="checker">
<rect x="0" y="0" width="11.6" height="11.4" fill="#f0e8e4" stroke="#5a4a4a" stroke-width="0.7"/>
<g fill="#b04a4a"><rect x="0.8" y="0.8" width="2.5" height="2.5"/><rect x="5.8" y="0.8" width="2.5" height="2.5"/><rect x="3.3" y="3.3" width="2.5" height="2.5"/><rect x="8.3" y="3.3" width="2.5" height="2.5"/><rect x="0.8" y="5.8" width="2.5" height="2.5"/><rect x="5.8" y="5.8" width="2.5" height="2.5"/><rect x="3.3" y="8.3" width="2.5" height="2.3"/><rect x="8.3" y="8.3" width="2.5" height="2.3"/></g>
</g>
<g id="camico">
<rect x="0.5" y="2.2" width="10.6" height="7.8" rx="0.8" fill="#4a4a4a" stroke="#1a1a1a" stroke-width="1"/>
<rect x="1" y="0.6" width="3.4" height="2" fill="#ddd" stroke="#1a1a1a" stroke-width="0.6"/>
<rect x="1.2" y="2.9" width="9.2" height="1.4" fill="#e4e4e4"/>
<circle cx="6.6" cy="6.6" r="2.7" fill="#d8d8d8" stroke="#1a1a1a" stroke-width="0.8"/>
<circle cx="6.6" cy="6.6" r="1.3" fill="#3a3030"/>
</g>
<g id="meshdata">
<path d="M1.8,1.8 H10.6 L6.2,11 Z" fill="none" stroke="#3a3a3a" stroke-width="1.1"/>
<circle cx="1.8" cy="1.8" r="1.5" fill="#eee" stroke="#2a2a2a" stroke-width="0.8"/><circle cx="10.6" cy="1.8" r="1.5" fill="#eee" stroke="#2a2a2a" stroke-width="0.8"/><circle cx="6.2" cy="11" r="1.5" fill="#eee" stroke="#2a2a2a" stroke-width="0.8"/>
</g>
</defs>
<!-- ===== outliner ===== -->
<g clip-path="url(#clipOut)">
<circle cx="774" cy="8.3" r="8" fill="#b8c0c8" fill-opacity="0.55"/>
<circle cx="754.5" cy="5" r="3.8" fill="#e8e8e8" stroke="#2e2e2e" stroke-width="0.9"/>
<path d="M759,6.8 H767" stroke="#6a6f74" stroke-width="1.4"/>
<circle cx="779.3" cy="7" r="2.9" fill="#3a60c4" stroke="#1a2a5a" stroke-width="0.6"/>
<circle cx="773.3" cy="9" r="3.6" fill="url(#gSph)" stroke="#333" stroke-width="0.7"/>
</g>
<path d="M771.8,15 V61.2 M776.6,61.2 H787" stroke="#4c4c4c" stroke-width="1.1" fill="none"/>
<use href="#plusc" x="777.5" y="24.6"/><use href="#plusc" x="777.4" y="42.9"/><use href="#plusc" x="772.7" y="61.2"/>
<use href="#rlayers" x="785.4" y="17.6"/>
<circle cx="792.5" cy="43.3" r="8.2" fill="#b4b4d0" fill-opacity="0.45"/>
<circle cx="792.5" cy="43.3" r="6.3" fill="url(#gGlobe)" stroke="#1e2838" stroke-width="1.1"/>
<path d="M788.5,40.5 Q790,38.5 792.5,39 Q793.5,41 791.5,43 Q790,45.5 788.3,44 Z M794.5,41.5 Q797,40.5 797.5,43.5 Q796.5,46.5 794.5,45.5 Z" fill="#3f8a3c" fill-opacity="0.9"/>
<path d="M788,57 H797.6 L792.8,66.6 Z" fill="none" stroke="#5a3208" stroke-width="3" stroke-linejoin="round"/>
<path d="M788,57 H797.6 L792.8,66.6 Z" fill="none" stroke="#f0922a" stroke-width="1.7" stroke-linejoin="round"/>
<g fill="#ffe8c8"><circle cx="788" cy="57" r="0.9"/><circle cx="797.6" cy="57" r="0.9"/><circle cx="792.8" cy="66.4" r="0.9"/></g>
<path d="M875.3,19.4 V30 M839.4,37.8 V48.4 M835.9,56.1 V66.7" stroke="#3a3a3a" stroke-width="1.3"/>
<circle cx="892" cy="24.5" r="8.5" fill="#fff" fill-opacity="0.2"/>
<use href="#rlayers" x="885" y="17.3"/>
<circle cx="856.5" cy="43.4" r="8.5" fill="#fff" fill-opacity="0.2"/>
<use href="#checker" x="850.7" y="37.7"/>
<use href="#meshdata" x="846.3" y="55.3"/>
<circle cx="870.6" cy="61.6" r="8.3" fill="#fff" fill-opacity="0.22"/>
<path d="M866,57.4 H875.4 L870.7,66.6 Z" fill="#b8946a" fill-opacity="0.5" stroke="#d8ac78" stroke-width="1.5" stroke-linejoin="round"/>
<g stroke="#c49a68" stroke-width="1.1" fill="#9a8264" fill-opacity="0.6"><rect x="885.2" y="55" width="10" height="12"/><path d="M890.2,55 V67 M885.2,61 H895.2" fill="none"/></g>
<!-- eye -->
<path d="M955.6,61.3 Q961.6,55.2 967.6,61.3 Q961.6,67 955.6,61.3 Z" fill="#f2f2f2" stroke="#4a4a4a" stroke-width="0.7"/>
<circle cx="961.8" cy="60.8" r="1.9" fill="#2a2a2a"/>
<!-- cursor -->
<path d="M977.6,55.6 V65.6 L980,63.4 L981.8,67.2 L983.4,66.4 L981.7,62.8 L984.6,62.6 Z" fill="#f4f4f4" stroke="#111" stroke-width="0.9" stroke-linejoin="round"/>
<use href="#camico" x="992" y="56.2"/>
<!-- v scrollbar -->
<rect x="1006.8" y="9.8" width="11.2" height="57.6" rx="5.6" fill="#585858" stroke="#4a4a4a" stroke-width="0.8"/>
<rect x="1007.3" y="14.5" width="10.2" height="52.6" rx="5.1" fill="url(#gThumbV)" stroke="#444" stroke-width="0.8"/>
<!-- h scrollbar -->
<rect x="750.6" y="73.4" width="251.2" height="11" rx="5.5" fill="#5a5a5a" stroke="#4a4a4a" stroke-width="0.8"/>
<rect x="751" y="73.8" width="234" height="10.2" rx="5.1" fill="url(#gThumbH)" stroke="#3e3e3e" stroke-width="0.8"/>
<!-- corner widgets -->
<path d="M748,77.5 L758,88 M748,81 L755,88 M748,84.5 L751.5,88" stroke="#4a4a4a" stroke-width="1.2"/>
<path d="M748,79 L757,88 M748,82.6 L753.5,88" stroke="#8c8c8c" stroke-width="0.8"/>
<path d="M1011,89 L1021,99 M1014.5,89 L1021,95.5 M1018,89 L1021,92" stroke="#3c3c3c" stroke-width="1.2"/>
<path d="M1012.8,89 L1021,97.2 M1016.3,89 L1021,93.7" stroke="#8c8c8c" stroke-width="0.8"/>
<!-- ===== header ===== -->
<!-- editor type icon -->
<rect x="759.4" y="95.8" width="12" height="4" rx="1.6" fill="#8a8a8a" stroke="#2a2a2a" stroke-width="0.6"/>
<rect x="767.4" y="96.2" width="3.8" height="3.2" rx="1" fill="#f0f0f0"/>
<rect x="759.4" y="101.8" width="12" height="5.2" rx="2.2" fill="#f2f2f2" stroke="#2a2a2a" stroke-width="0.6"/>
<path d="M760.6,104.4 L762.6,102.9 V105.9 Z M770.2,104.4 L768.2,102.9 V105.9 Z" fill="#111"/>
<path d="M776.6,95.6 L779.4,99.8 H773.8 Z M776.6,107.4 L779.4,103.2 H773.8 Z" fill="#a8a8a8"/>
<!-- tab separators -->
<path d="M807.5,93 V109.4 M826.6,93 V109.4 M844.7,93 V109.4 M863.5,93 V109.4 M881.3,93 V109.4 M899.8,93 V109.4 M918.7,93 V109.4 M936.5,93 V109.4 M955.2,93 V109.4 M973.7,93 V109.4 M992.4,93 V109.4" stroke="#2a2a2a" stroke-width="1.2"/>
<g opacity="0.8">
<!-- render (camera) -->
<g transform="translate(793,95.6)">
<rect x="0.4" y="2.6" width="12.2" height="8.4" rx="0.8" fill="#5e5e5e" stroke="#2c2c2c" stroke-width="0.8"/>
<rect x="0.8" y="1" width="3.6" height="2" fill="#b0b0b0"/><rect x="0.8" y="2.8" width="11.4" height="1.6" fill="#9c9c9c"/>
<circle cx="7.6" cy="7.4" r="3" fill="#8a7a7a" stroke="#2c2c2c" stroke-width="0.8"/><circle cx="7.6" cy="7.4" r="1.5" fill="#4a2828"/>
</g>
<!-- render layers -->
<g transform="translate(810.6,94.6) scale(0.98)" opacity="0.92"><use href="#rlayers"/></g>
<!-- scene -->
<circle cx="831.2" cy="96.4" r="2.2" fill="#c8d890" fill-opacity="0.55"/>
<rect x="835.6" y="96.2" width="5.6" height="8.6" rx="2.4" fill="#5a78b8" stroke="#2a3a60" stroke-width="0.6"/>
<circle cx="833.6" cy="104.6" r="3.3" fill="url(#gSph)" stroke="#333" stroke-width="0.6" opacity="0.85"/>
<!-- world -->
<circle cx="854.1" cy="101.4" r="5.9" fill="url(#gGlobe)" stroke="#1e2838" stroke-width="1" opacity="0.85"/>
<path d="M850.5,99 Q852,97 854,97.6 Q855,99.6 853,101.4 Q851.6,103.6 850.3,102.4 Z M856,100 Q858.4,99 858.8,102 Q858,104.6 856,103.8 Z" fill="#5a8a58" fill-opacity="0.85"/>
<!-- object cube -->
<g transform="translate(866.2,95)">
<path d="M6.2,0.4 L12,2.8 L12,9.6 L6.2,12.6 L0.4,9.6 L0.4,2.8 Z" fill="#c88a48" stroke="#7a5428" stroke-width="0.7"/>
<path d="M6.2,0.4 L12,2.8 L6.2,5.4 L0.4,2.8 Z" fill="#e8b478"/>
<path d="M6.2,5.4 L12,2.8 L12,9.6 L6.2,12.6 Z" fill="#a86c34"/>
</g>
<!-- constraints chain -->
<g fill="none" stroke="#c4c4c4" stroke-width="1.7" stroke-linecap="round">
<rect x="884" y="100" width="8" height="5.4" rx="2.7" transform="rotate(-35 888 102.7)"/>
<rect x="889" y="97" width="8" height="5.4" rx="2.7" transform="rotate(-35 893 99.7)"/>
</g>
</g>
<!-- modifiers wrench -->
<g>
<path d="M903.4,105.8 L910.6,99.4" stroke="#1e3260" stroke-width="4" stroke-linecap="round"/>
<circle cx="912.3" cy="97.9" r="3.7" fill="#1e3260"/>
<path d="M903.4,105.8 L910.6,99.4" stroke="#e4ecf8" stroke-width="2.3" stroke-linecap="round"/>
<circle cx="912.3" cy="97.9" r="2.9" fill="#e4ecf8"/>
<path d="M912.1,98.1 L915.9,94.3" stroke="#1e3260" stroke-width="3.2"/>
<path d="M912.5,97.7 L916.6,93.6" stroke="#5b83d0" stroke-width="1.9"/>
<path d="M904.2,105.1 L908.6,101.2" stroke="#9fb4d4" stroke-width="0.7" stroke-linecap="round"/>
</g>
<g opacity="0.82">
<!-- data -->
<g transform="translate(921.5,95.6)"><path d="M1.8,1.8 H10.6 L6.2,10.6 Z" fill="none" stroke="#2c2c2c" stroke-width="1.1"/><circle cx="1.8" cy="1.8" r="1.3" fill="#ccc" stroke="#222" stroke-width="0.7"/><circle cx="10.6" cy="1.8" r="1.3" fill="#ccc" stroke="#222" stroke-width="0.7"/><circle cx="6.2" cy="10.6" r="1.5" fill="#ddd" stroke="#222" stroke-width="0.7"/></g>
<!-- material -->
<circle cx="945.8" cy="101.4" r="5.8" fill="url(#gMat)" stroke="#2c2626" stroke-width="0.8"/>
<!-- texture -->
<g transform="translate(958.8,96) scale(0.97)" opacity="0.92"><use href="#checker"/></g>
<!-- particles -->
<g stroke="#dcd49c" stroke-width="0.8" stroke-linecap="round">
<path d="M978.7,94.2 V101.2 M975.2,97.7 H982.2"/><path d="M986,94.2 V101.2 M982.5,97.7 H989.5"/><path d="M980.5,100.1 V106.1 M977.5,103.1 H983.5"/><path d="M986.6,103 V108.2 M984,105.6 H989.2"/>
</g>
<g fill="#fffbe0"><circle cx="978.7" cy="97.7" r="0.9"/><circle cx="986" cy="97.7" r="0.9"/><circle cx="980.5" cy="103.1" r="0.8"/><circle cx="986.6" cy="105.6" r="0.8"/></g>
<!-- physics -->
<path d="M995.6,101.2 L999.6,106.6 L1004.4,98.4" fill="none" stroke="#4a6a98" stroke-width="2.3" stroke-linejoin="round" stroke-linecap="round"/>
<circle cx="1004.6" cy="96.8" r="2.7" fill="url(#gSph)" stroke="#444" stroke-width="0.5"/>
</g>
<!-- ===== breadcrumb ===== -->
<g transform="translate(756.2,122.4)">
<path d="M1,13.4 L5.4,8.4" stroke="#d8d8d8" stroke-width="1.4" stroke-linecap="round"/>
<path d="M3.2,5.6 L8.6,11 L10,9.6 L8.8,7.8 L12,4.8 L13.6,5 L9.4,0.6 L9.6,2.4 L6.4,5.4 L4.6,4.2 Z" fill="#e6e6e6" stroke="#3a3a3a" stroke-width="0.7" stroke-linejoin="round"/>
</g>
<circle cx="779.2" cy="124.6" r="2.4" fill="#d0e888" fill-opacity="0.7"/><circle cx="779.2" cy="124.6" r="1" fill="#f4ffd0"/>
<rect x="784" y="124" width="5.8" height="9" rx="2.6" fill="#4a78d0" stroke="#1e3a78" stroke-width="0.6"/>
<rect x="785" y="125" width="2" height="6" rx="1" fill="#a8c4f0" fill-opacity="0.8"/>
<circle cx="781.8" cy="132.6" r="3.3" fill="url(#gSph)" stroke="#333" stroke-width="0.6"/>
<path d="M796,127 L799.4,130.2 L796,133.4 Z" fill="#2e3644"/>
<g transform="translate(815,122.8)">
<path d="M6,0.4 L11.6,2.8 L11.6,10 L6,13 L0.4,10 L0.4,2.8 Z" fill="#e89840" stroke="#f8ecd8" stroke-width="0.9" stroke-linejoin="round"/>
<path d="M6,0.8 L11.2,3 L6,5.6 L0.8,3 Z" fill="#f8d4a0"/>
<path d="M6,5.6 L11.2,3 L11.2,9.8 L6,12.6 Z" fill="#c87424"/>
<path d="M6,0.4 L11.6,2.8 L11.6,10 L6,13 L0.4,10 L0.4,2.8 Z" fill="none" stroke="#6a4a20" stroke-width="0.4"/>
</g>
<!-- ===== Add Modifier arrows ===== -->
<path d="M1008.4,157.6 L1010.9,161.4 H1005.9 Z M1008.4,169.4 L1010.9,165.6 H1005.9 Z" fill="#e8e8e8"/>
<!-- ===== modifier header ===== -->
<path d="M762.6,191.2 H772.4 L767.5,197 Z" fill="#1a1a1a" fill-opacity="0.5" transform="translate(0.5,0.8)"/>
<path d="M762.6,191.2 H772.4 L767.5,197 Z" fill="#f4f4f4"/>
<g transform="translate(788.8,187.6)">
<rect x="0" y="0" width="11" height="12.8" fill="#4a6088" stroke="#e8eef8" stroke-width="0.9"/>
<path d="M3.7,0 V12.8 M7.3,0 V12.8 M0,4.3 H11 M0,8.5 H11" stroke="#b8c8e0" stroke-width="0.8"/>
</g>
<g transform="translate(850.6,187.4) scale(1.18,1.14)"><use href="#camico"/></g>
<!-- eye (dark bg) -->
<path d="M872.8,193.3 Q878.6,187.6 884.4,193.3 Q878.6,198.6 872.8,193.3 Z" fill="#e4e4e4" stroke="#333" stroke-width="0.6"/>
<circle cx="878.8" cy="192.8" r="1.8" fill="#2a2a2a"/>
<!-- editmode icon -->
<g transform="translate(895.8,186.6)">
<path d="M2,2.6 L7.4,0.8 L13,3 L13,9.6 L7.4,12.6 L2,10.4 Z" fill="#c8c8c8" fill-opacity="0.75" stroke="#5a5a5a" stroke-width="0.8"/>
<path d="M7.4,5.2 V12.6 M2,2.6 L7.4,5.2 L13,3" stroke="#6a6a6a" stroke-width="0.7" fill="none"/>
<g fill="#f2a640" stroke="#5a3008" stroke-width="0.8"><rect x="0.6" y="0.9" width="2.8" height="2.8"/><rect x="5.9" y="2.4" width="2.8" height="2.8"/><rect x="0.6" y="7.7" width="2.8" height="2.8"/><rect x="5.9" y="10.1" width="2.8" height="2.8"/></g>
</g>
<!-- cage icon -->
<g opacity="0.85"><path d="M919.6,188.8 H928.9 L924.3,198 Z" fill="none" stroke="#5c5c5c" stroke-width="0.9"/><circle cx="919.6" cy="188.8" r="1.5" fill="#e4e4e4" stroke="#555" stroke-width="0.7"/><circle cx="928.9" cy="188.8" r="1.5" fill="#e4e4e4" stroke="#555" stroke-width="0.7"/><circle cx="924.3" cy="198" r="1.5" fill="#e4e4e4" stroke="#555" stroke-width="0.7"/></g>
<!-- up / down -->
<path d="M952.8,190.2 L957.2,196.4 H948.4 Z" fill="#ececec" stroke="#3a3a3a" stroke-width="0.8" stroke-linejoin="round"/>
<path d="M972.6,196.6 L977,190.4 H968.2 Z" fill="#ececec" stroke="#3a3a3a" stroke-width="0.8" stroke-linejoin="round"/>
<!-- X close -->
<path d="M996,189.8 L1003.4,197.2 M1003.4,189.8 L996,197.2" stroke="#2a2a2a" stroke-width="3.6" stroke-linecap="round" stroke-opacity="0.55"/>
<path d="M996,189.8 L1003.4,197.2 M1003.4,189.8 L996,197.2" stroke="#f6f6f6" stroke-width="2.2" stroke-linecap="round"/>
<!-- ===== object field ===== -->
<g transform="translate(763.6,263.4)">
<path d="M5.6,0.4 L10.8,2.6 L10.8,9.4 L5.6,12.2 L0.4,9.4 L0.4,2.6 Z" fill="#e89840" stroke="#f8ecd8" stroke-width="0.9" stroke-linejoin="round"/>
<path d="M5.6,0.8 L10.4,2.8 L5.6,5.2 L0.8,2.8 Z" fill="#f8d4a0"/>
<path d="M5.6,5.2 L10.4,2.8 L10.4,9.2 L5.6,11.8 Z" fill="#c87424"/>
<path d="M5.6,0.4 L10.8,2.6 L10.8,9.4 L5.6,12.2 L0.4,9.4 L0.4,2.6 Z" fill="none" stroke="#6a4a20" stroke-width="0.4"/>
</g>
<path d="M867.4,266.2 L874.2,273 M874.2,266.2 L867.4,273" stroke="#2a2a2a" stroke-width="3.2" stroke-linecap="round"/>
<path d="M867.4,266.2 L874.2,273 M874.2,266.2 L867.4,273" stroke="#f4f4f4" stroke-width="1.7" stroke-linecap="round"/>
<!-- vertex group icon -->
<g fill="#f0f0f0" stroke="#1e1e1e" stroke-width="0.8">
<rect x="892.2" y="264.6" width="2.7" height="2.7"/><rect x="892.2" y="269.2" width="2.7" height="2.7"/>
<rect x="896.8" y="262.6" width="2.7" height="2.7"/><rect x="896.8" y="267.2" width="2.7" height="2.7"/><rect x="896.8" y="271.8" width="2.7" height="2.7"/>
</g>
<g fill="#d8d8d8" stroke="#444" stroke-width="0.6"><rect x="901.2" y="265" width="2.2" height="2.2"/><rect x="901.2" y="269.6" width="2.2" height="2.2"/></g>
</svg>
</body></html>
